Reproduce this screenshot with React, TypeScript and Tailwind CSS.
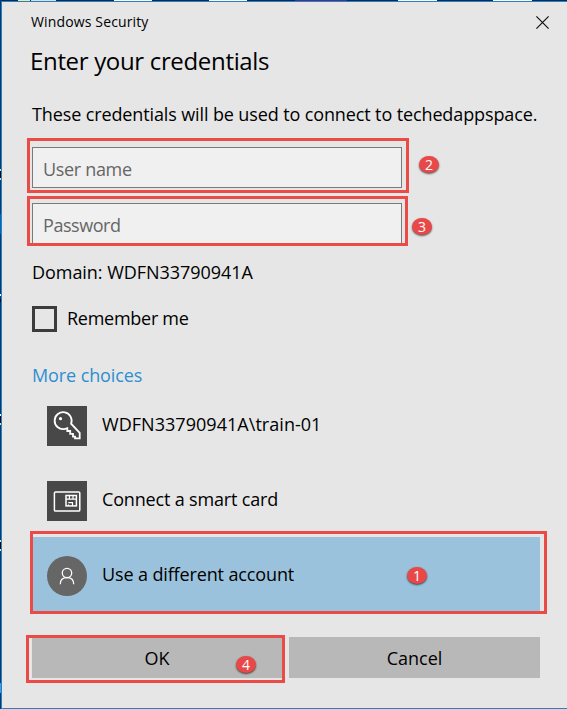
import type { ReactNode } from "react";

const ink = "whitespace-nowrap text-black";

function Marker({ n, place }: { n: number; place: string }) {
  return (
    <span
      className={`absolute flex h-[17px] w-5 items-center justify-center rounded-[50%] bg-[#e94848] text-[14px] leading-none text-white shadow-[0_1px_2px_rgba(0,0,0,0.65)] ${place}`}
    >
      {n}
    </span>
  );
}

function Outline({ place }: { place: string }) {
  return <span className={`pointer-events-none absolute border-[3px] border-[#eb4b46] ${place}`} />;
}

function Choice({ icon, children }: { icon: ReactNode; children: ReactNode }) {
  return (
    <div className="flex h-[75px] items-center pl-[15px] pt-[3px]">
      {icon}
      <div className="ml-[15px] -mt-[5px]">{children}</div>
    </div>
  );
}

function KeyIcon() {
  return (
    <svg className="h-10 w-10 shrink-0 bg-[#484848]" viewBox="0 0 40 40" fill="none" stroke="#fff" strokeWidth="1.8">
      <path d="M24.1 17.7 A8.5 8.5 0 1 0 17.3 23.1 L20.3 22.2 V25 H23.2 V27.8 H26 V30.7 H28 V32.3 H32.7 V26.8 Z" />
      <circle cx="13.5" cy="12.7" r="1.6" fill="#fff" stroke="none" />
    </svg>
  );
}

function CardIcon() {
  return (
    <svg className="h-10 w-10 shrink-0 bg-[#484848]" viewBox="0 0 40 40" fill="none" stroke="#fff" strokeWidth="1.5">
      <rect x="7.4" y="10.9" width="25.4" height="19.2" rx="1.2" />
      <rect x="19" y="14.5" width="10.4" height="10.4" />
      <path d="M22.4 14.5V17.7M26 14.5V17.7M19 18.2H29M21.3 21.7H25.5V25M21.5 23.5V25" strokeWidth="1.2" />
    </svg>
  );
}

function PersonIcon() {
  return (
    <svg className="h-10 w-10 shrink-0 rounded-full bg-[#666]" viewBox="0 0 40 40" fill="none" stroke="#fff" strokeWidth="1.3">
      <circle cx="20" cy="17" r="4.7" />
      <path d="M13.3 28.3C13.3 24.2 16 21.7 20 21.7S26.7 24.2 26.7 28.3" />
    </svg>
  );
}

export default function App() {
  return (
    <div className="relative flex h-[709px] w-[567px] flex-col overflow-hidden bg-[#e6e6e6] font-['Open_Sans','Noto_Sans',sans-serif] text-[18px] leading-6">
      <div className="flex h-px shrink-0 bg-[#082a51]">
        <i className="ml-[18px] w-3 bg-[#f5e8a0]" />
        <i className="ml-px w-[25px] bg-[#dedede]" />
        <i className="ml-[58px] w-[38px] bg-white" />
        <i className="ml-[57px] w-[38px] bg-white" />
        <i className="ml-[48px] w-[52px] bg-[#572c82]" />
        <i className="ml-[51px] w-[39px] bg-white" />
        <i className="ml-[56px] w-[39px] bg-white" />
      </div>
      <div className="flex min-h-0 flex-1">
        <div className="flex w-px shrink-0 flex-col bg-[#07386b]">
          <i className="mt-[168px] h-[2px] bg-[#f0d9a0]" />
          <i className="h-[7px] bg-black" />
          <i className="h-[2px] bg-[#f0d9a0]" />
          <i className="mt-[34px] h-5 bg-[#0864b5]" />
          <i className="mt-[60px] h-[2px] bg-white" />
          <i className="mt-[3px] h-[3px] bg-black" />
          <i className="mt-[112px] h-[2px] bg-white" />
          <i className="h-[7px] bg-black" />
          <i className="h-[2px] bg-[#f0d9a0]" />
          <i className="mt-[115px] h-[2px] bg-[#f3e79a]" />
          <i className="h-[7px] bg-black" />
          <i className="h-[2px] bg-[#f3e79a]" />
          <i className="mt-[132px] h-[10px] bg-[#3b9df0]" />
        </div>
        <main className="flex min-w-0 flex-1 flex-col border-y border-l border-[#2583c4] pl-[30px]">
          <header className="flex h-10 items-center justify-between pr-[18px]">
            <span className={`${ink} -ml-px text-[14px] tracking-[0.14px]`}>Windows Security</span>
            <svg className="mt-[1px] h-[13px] w-[13px]" viewBox="0 0 13 13" stroke="#111" strokeWidth="1.2">
              <path d="M.4.4 12.6 12.6M12.6.4.4 12.6" />
            </svg>
          </header>
          <h1 className={`${ink} -ml-[2px] flex h-[40px] items-center pb-[2px] text-[24px] tracking-[-0.33px]`}>
            Enter your credentials
          </h1>
          <p className={`${ink} mt-[13px] flex h-[40px] items-center pb-[2px] tracking-[-0.12px]`}>
            These credentials will be used to connect to techedappspace.
          </p>
          <div className="mt-[12px] flex h-[41px] w-[370px] items-center border border-[#7a7a7a] bg-[#f0f0f0] pl-[10px] pt-[2px] tracking-[-0.33px] text-[#666]">
            <span>User name</span>
          </div>
          <div className="mt-[15px] flex h-[41px] w-[370px] items-center border border-[#7a7a7a] bg-[#f0f0f0] pl-[10px] pt-[2px] tracking-[-0.45px] text-[#666]">
            <span>Password</span>
          </div>
          <p className={`${ink} mt-[16px] flex h-6 items-center tracking-[-0.05px]`}>Domain: WDFN33790941A</p>
          <label className="mt-[21px] flex h-[27px] items-end">
            <span className="h-[26px] w-[25px] border-[3px] border-[#3c3c3c]" />
            <span className={`${ink} mb-[2px] ml-[10px] tracking-[-0.27px]`}>Remember me</span>
          </label>
          <p className="mt-[31px] h-6 whitespace-nowrap tracking-[-0.1px] text-[#2d8fd0]">More choices</p>
          <section className="w-[508px]">
            <Choice icon={<KeyIcon />}>
              <span className={`${ink} tracking-[0.04px]`}>WDFN33790941A\train-01</span>
            </Choice>
            <Choice icon={<CardIcon />}>
              <span className={`${ink} tracking-[-0.17px]`}>Connect a smart card</span>
            </Choice>
            <div className="bg-[#9bc2dc]">
              <Choice icon={<PersonIcon />}>
                <span className={`${ink} tracking-[-0.13px]`}>Use a different account</span>
              </Choice>
            </div>
          </section>
          <footer className="mt-[25px] flex h-[41px] gap-[7px]">
            <div className="flex w-[250px] items-center justify-center bg-[#b8b8b8]">
              <span className={ink}>OK</span>
            </div>
            <div className="flex w-[251px] items-center justify-center bg-[#b8b8b8]">
              <span className={ink}>Cancel</span>
            </div>
          </footer>
        </main>
      </div>
      <Outline place="left-[27px] top-[138px] h-[55px] w-[382px]" />
      <Outline place="left-[27px] top-[196px] h-[50px] w-[381px]" />
      <Outline place="left-[30px] top-[531px] h-[83px] w-[517px]" />
      <Outline place="left-[26px] top-[635px] h-[48px] w-[259px]" />
      <Marker n={2} place="left-[419px] top-[156px]" />
      <Marker n={3} place="left-[412px] top-[218px]" />
      <Marker n={1} place="left-[407px] top-[567px]" />
      <Marker n={4} place="left-[236px] top-[656px]" />
    </div>
  );
}
